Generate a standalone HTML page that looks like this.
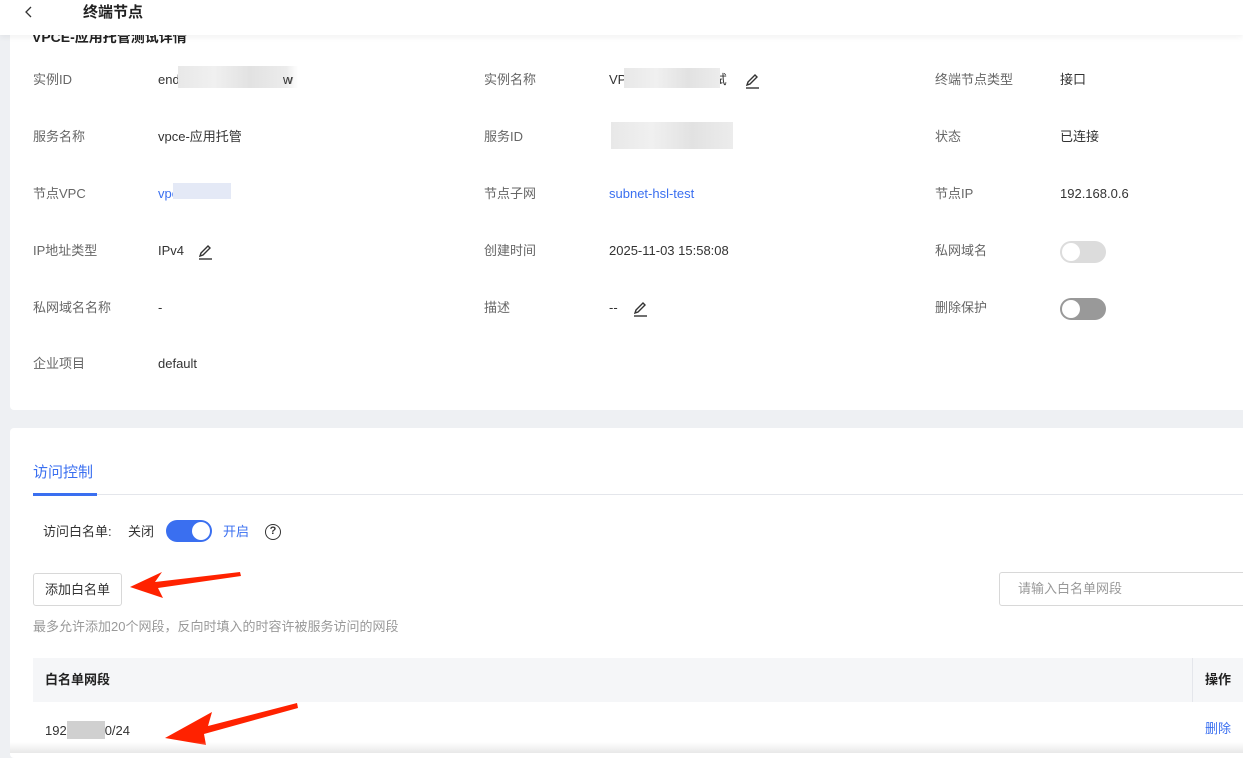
<!DOCTYPE html>
<html><head><meta charset="utf-8"><style>
*{box-sizing:border-box;margin:0;padding:0}
body{width:1243px;height:753px;overflow:hidden;background:#eef0f3;font-family:"Liberation Sans","Noto Sans CJK SC",sans-serif;font-size:13px;color:#333;position:relative}
.abs{position:absolute;white-space:nowrap;line-height:16px}
.hdr{position:absolute;left:0;top:0;width:1243px;height:35px;background:#fff;box-shadow:0 2px 6px rgba(0,0,0,.06);z-index:5}
.card{position:absolute;left:10px;width:1240px;background:#fff;border-radius:4px}
.lbl{color:#666}
.blur{position:absolute;background:linear-gradient(90deg,#e8e8e8,#f0f0f0,#e2e2e2,#ececec)}
.sw{position:absolute;width:46px;height:22px;border-radius:11px}
.sw i{position:absolute;top:2px;width:18px;height:18px;border-radius:50%;background:#fff}
.pen{position:absolute;width:16px;height:16px}
</style></head><body>
<div class="hdr">
<svg class="abs" style="left:23px;top:5px" width="12" height="14" viewBox="0 0 12 14"><path d="M8 2L3 7l5 5" fill="none" stroke="#333" stroke-width="1.3"/></svg>
<div class="abs" style="left:83px;top:4px;font-size:15px;line-height:18px;font-weight:bold;color:#222">终端节点</div>
</div>
<div class="card" style="top:20px;height:390px">
<div class="abs" style="left:22px;top:9px;font-size:14px;font-weight:bold;color:#222">VPCE-应用托管测试详情</div>
</div>
<div class="card" style="top:428px;height:330px"></div>

<div class="abs lbl" style="left:33px;top:72px">实例ID</div>
<div class="abs" style="left:158px;top:72px">endpoint-xxxxxxxxxxxw</div>
<div class="blur" style="left:178px;top:66px;width:120px;height:22px;background:linear-gradient(90deg,#e8e8e8,#f0f0f0,#e2e2e2,#ececec 90%,transparent)"></div>
<div class="abs" style="left:283px;top:72px">w</div>
<div class="abs lbl" style="left:484px;top:72px">实例名称</div>
<div class="abs" style="left:609px;top:72px">VPCE-应用托管测试</div>
<div class="blur" style="left:624px;top:68px;width:96px;height:20px"></div>
<svg class="pen" style="left:744px;top:73px" viewBox="0 0 16 16"><path d="M3 12l1-3 7-7 2 2-7 7z" fill="none" stroke="#333" stroke-width="1.4"/><path d="M2 15h13" stroke="#333" stroke-width="1.4"/></svg>
<div class="abs lbl" style="left:935px;top:72px">终端节点类型</div>
<div class="abs" style="left:1060px;top:72px">接口</div>

<div class="abs lbl" style="left:33px;top:129px">服务名称</div>
<div class="abs" style="left:158px;top:129px">vpce-应用托管</div>
<div class="abs lbl" style="left:484px;top:129px">服务ID</div>
<div class="blur" style="left:611px;top:122px;width:122px;height:27px"></div>
<div class="abs lbl" style="left:935px;top:129px">状态</div>
<div class="abs" style="left:1060px;top:129px">已连接</div>

<div class="abs lbl" style="left:33px;top:186px">节点VPC</div>
<div class="abs" style="left:158px;top:186px;color:#3a6ff0">vpc</div>
<div class="blur" style="left:173px;top:183px;width:58px;height:16px;background:#e4e9f6"></div>
<div class="abs lbl" style="left:484px;top:186px">节点子网</div>
<div class="abs" style="left:609px;top:186px;color:#3a6ff0">subnet-hsl-test</div>
<div class="abs lbl" style="left:935px;top:186px">节点IP</div>
<div class="abs" style="left:1060px;top:186px">192.168.0.6</div>

<div class="abs lbl" style="left:33px;top:243px">IP地址类型</div>
<div class="abs" style="left:158px;top:243px">IPv4</div>
<svg class="pen" style="left:197px;top:244px" viewBox="0 0 16 16"><path d="M3 12l1-3 7-7 2 2-7 7z" fill="none" stroke="#333" stroke-width="1.4"/><path d="M2 15h13" stroke="#333" stroke-width="1.4"/></svg>
<div class="abs lbl" style="left:484px;top:243px">创建时间</div>
<div class="abs" style="left:609px;top:243px">2025-11-03 15:58:08</div>
<div class="abs lbl" style="left:935px;top:243px">私网域名</div>
<div class="sw" style="left:1060px;top:241px;background:#dcdcdc"><i style="left:2px"></i></div>

<div class="abs lbl" style="left:33px;top:300px">私网域名名称</div>
<div class="abs" style="left:158px;top:300px">-</div>
<div class="abs lbl" style="left:484px;top:300px">描述</div>
<div class="abs" style="left:609px;top:300px">--</div>
<svg class="pen" style="left:632px;top:301px" viewBox="0 0 16 16"><path d="M3 12l1-3 7-7 2 2-7 7z" fill="none" stroke="#333" stroke-width="1.4"/><path d="M2 15h13" stroke="#333" stroke-width="1.4"/></svg>
<div class="abs lbl" style="left:935px;top:300px">删除保护</div>
<div class="sw" style="left:1060px;top:298px;background:#999"><i style="left:2px"></i></div>

<div class="abs lbl" style="left:33px;top:356px">企业项目</div>
<div class="abs" style="left:158px;top:356px">default</div>

<div class="abs" style="left:33px;top:464px;font-size:15px;line-height:18px;color:#3a6ff0">访问控制</div>
<div class="abs" style="left:33px;top:494px;width:1210px;height:1px;background:#e4e6eb"></div>
<div class="abs" style="left:33px;top:493px;width:64px;height:3px;background:#3a6ff0"></div>
<div class="abs" style="left:43px;top:524px">访问白名单:</div>
<div class="abs" style="left:128px;top:524px">关闭</div>
<div class="sw" style="left:166px;top:520px;background:#3a6ff0"><i style="left:26px"></i></div>
<div class="abs" style="left:223px;top:524px;color:#3a6ff0">开启</div>
<div class="abs" style="left:265px;top:524px;width:16px;height:16px;border:1.5px solid #333;border-radius:50%;font-size:11px;text-align:center;line-height:13px;font-weight:bold">?</div>

<div class="abs" style="left:33px;top:573px;width:89px;height:33px;border:1px solid #d8d8d8;border-radius:3px;text-align:center;line-height:31px">添加白名单</div>
<svg class="abs" style="left:125px;top:565px" width="120" height="36" viewBox="0 0 120 36"><path d="M115 7L30 17 37 7 5 22 38 33 33 23 116 11z" fill="#ff2200"/></svg>
<div class="abs" style="left:999px;top:572px;width:250px;height:34px;border:1px solid #d8d8d8;border-radius:3px;padding-left:18px;line-height:32px;color:#999">请输入白名单网段</div>
<div class="abs" style="left:33px;top:619px;color:#999">最多允许添加20个网段，反向时填入的时容许被服务访问的网段</div>

<div class="abs" style="left:33px;top:658px;width:1210px;height:44px;background:#f5f6f8"></div>
<div class="abs" style="left:1192px;top:658px;width:1px;height:44px;background:#e4e6eb"></div>
<div class="abs" style="left:45px;top:672px;font-weight:bold;color:#222">白名单网段</div>
<div class="abs" style="left:1205px;top:672px;font-weight:bold;color:#222">操作</div>
<div class="abs" style="left:45px;top:721px">192<span style="display:inline-block;width:38px;height:18px;background:#d0d0d0;vertical-align:-4px"></span>0/24</div>
<div class="abs" style="left:1205px;top:721px;color:#3a6ff0">删除</div>
<svg class="abs" style="left:160px;top:700px" width="140" height="46" viewBox="0 0 140 46"><path d="M137 3L48 26 52 12 5 38 46 45 44 34 138 8z" fill="#ff2200"/></svg>
<div class="abs" style="left:10px;top:742px;width:1233px;height:11px;background:linear-gradient(rgba(255,255,255,0),#e8e8e8)"></div>
</body></html>
